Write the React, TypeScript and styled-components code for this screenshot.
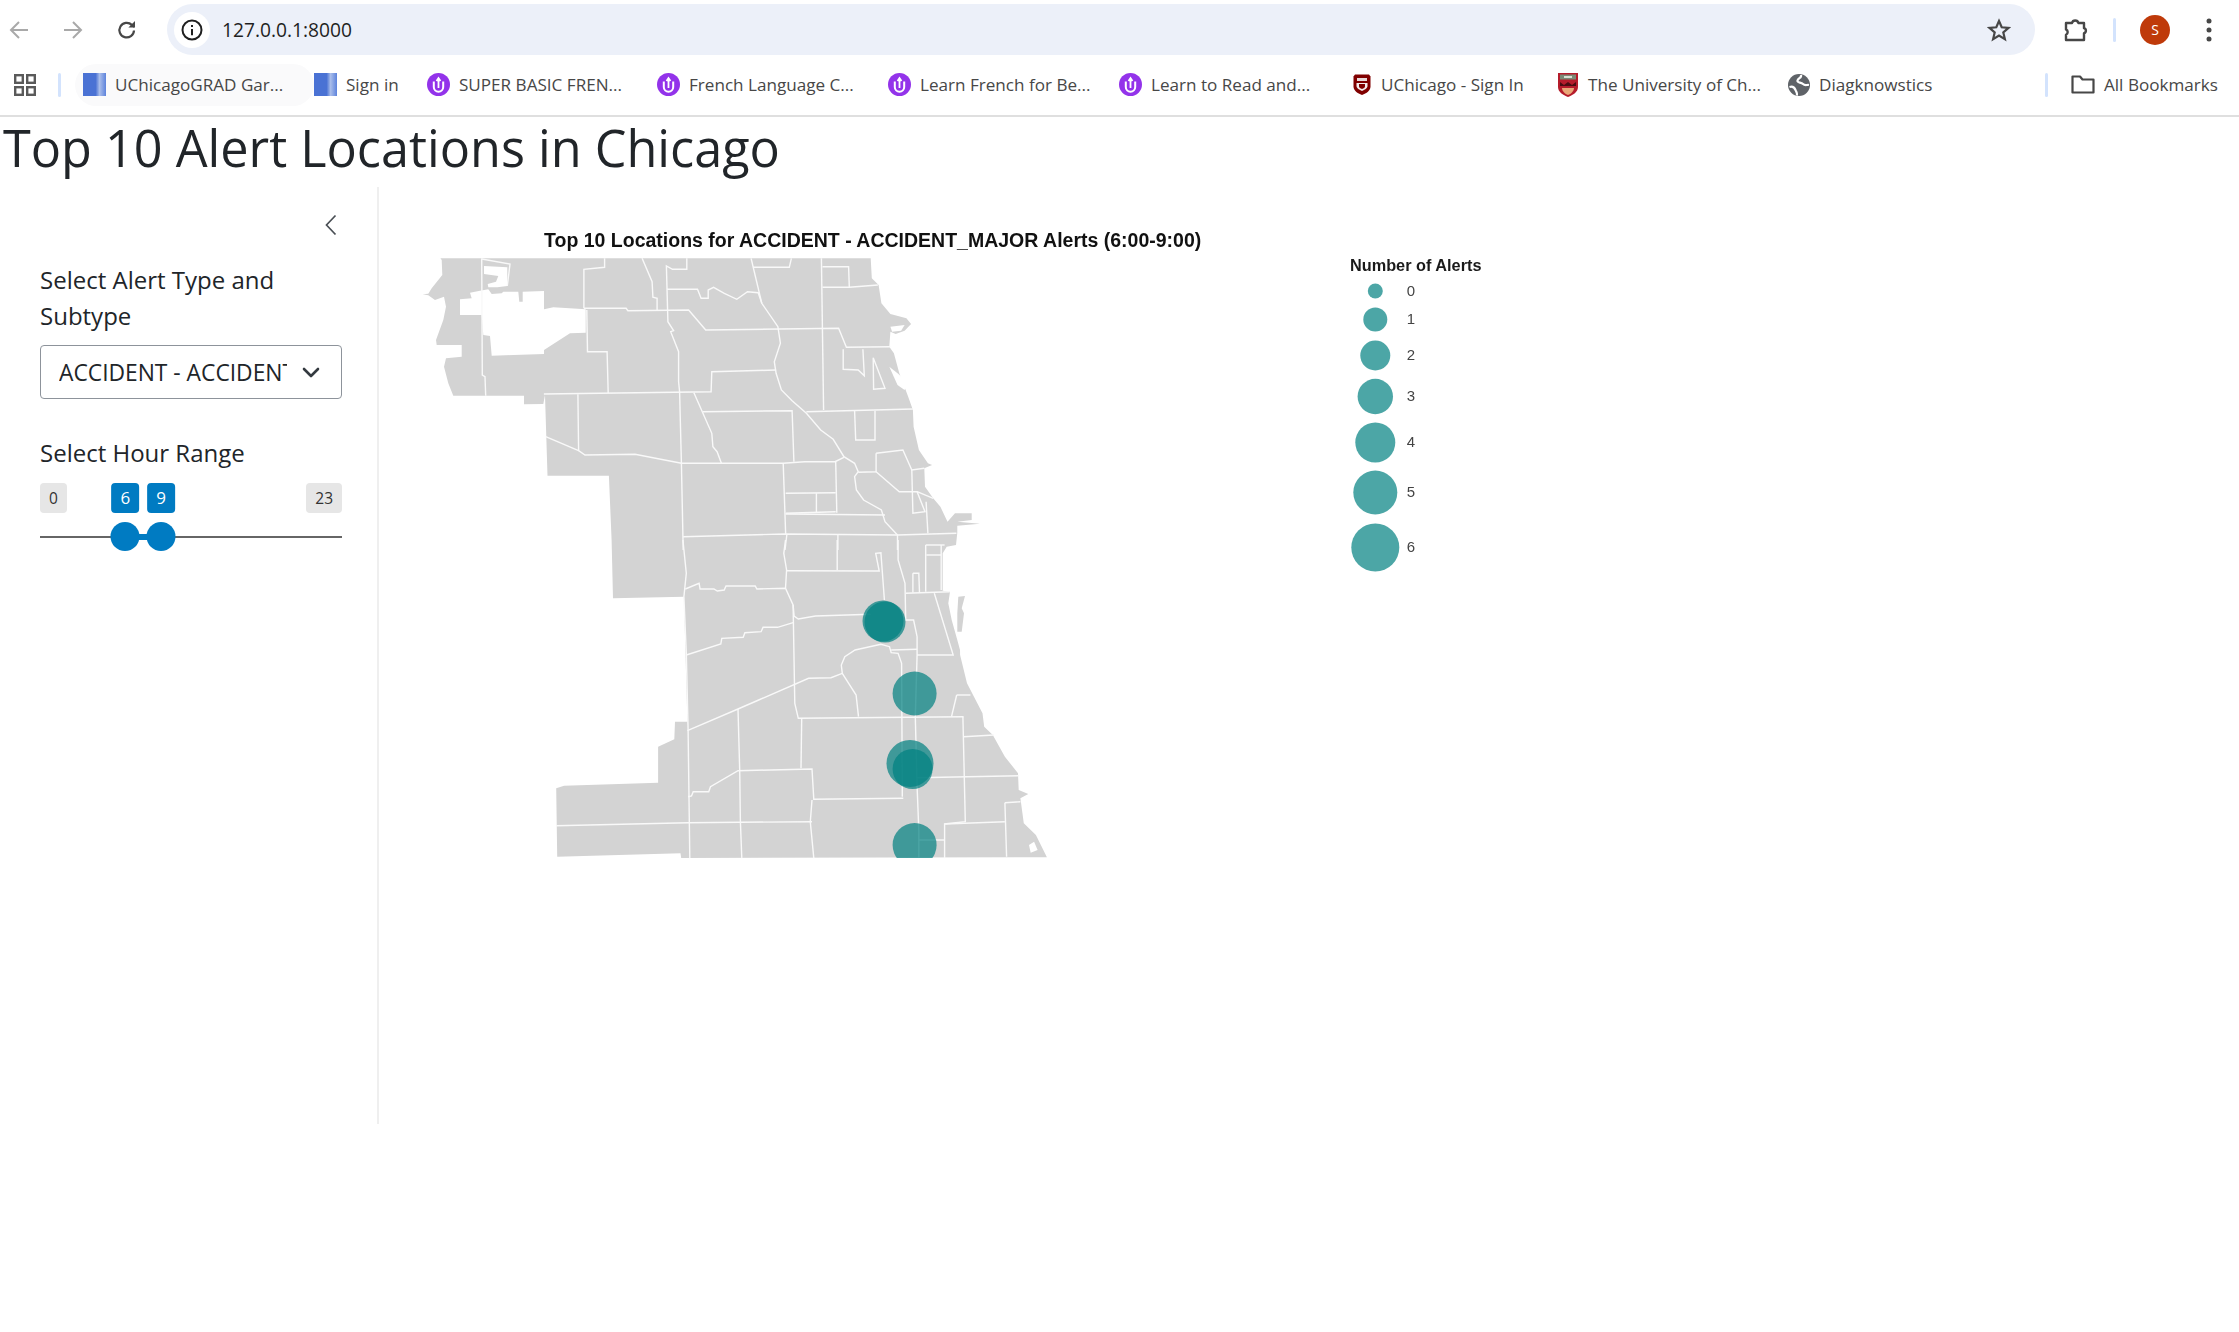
import React from "react";
import styled, { createGlobalStyle } from "styled-components";

const GlobalStyle = createGlobalStyle`
  html, body { margin: 0; padding: 0; background: #fff; }
  body { font-family: "Open Sans", "Noto Sans", sans-serif; color: #212529; }
`;

const Page = styled.div`
  width: 2239px;
  height: 1332px;
  overflow: hidden;
  background: #fff;
`;

/* ---------- browser chrome ---------- */
const Toolbar = styled.div`
  display: flex;
  align-items: center;
  height: 51px;
  padding-top: 4px;
`;
const NavSlot = styled.div<{ $w: number; $ml?: number }>`
  display: flex;
  align-items: center;
  justify-content: center;
  flex: none;
  width: ${(p) => p.$w}px;
  margin-left: ${(p) => p.$ml ?? 0}px;
`;
const AddressBar = styled.div`
  display: flex;
  align-items: center;
  flex: none;
  width: 1868px;
  height: 51px;
  margin-left: 21px;
  background: #ecf0f9;
  border-radius: 26px;
`;
const InfoBadge = styled.div`
  display: flex;
  align-items: center;
  justify-content: center;
  flex: none;
  width: 36px;
  height: 36px;
  margin-left: 7px;
  background: #fff;
  border-radius: 50%;
`;
const Url = styled.div`
  flex: 1;
  margin-left: 12px;
  font-family: "Open Sans", sans-serif;
  font-size: 19.2px;
  color: #1f1f1f;
`;
const StarSlot = styled.div`
  display: flex;
  margin-right: 24px;
`;
const ToolDivider = styled.div`
  flex: none;
  width: 3px;
  height: 24px;
  margin-right: 24px;
  background: #d3e3fd;
  border-radius: 2px;
`;
const Avatar = styled.div`
  display: flex;
  align-items: center;
  justify-content: center;
  flex: none;
  width: 30px;
  height: 30px;
  background: #bf3a0a;
  border-radius: 50%;
  color: #fff;
  font-size: 14px;
`;
const BookmarkBar = styled.div`
  display: flex;
  align-items: center;
  height: 62px;
  padding-bottom: 1px;
  border-bottom: 2px solid #dfdfdf;
  box-sizing: border-box;
`;
const BarDivider = styled.div<{ $left: number; $right: number }>`
  flex: none;
  width: 3px;
  height: 24px;
  margin: 0 ${(p) => p.$right}px 0 ${(p) => p.$left}px;
  background: #d3e3fd;
  border-radius: 2px;
`;
const Bookmark = styled.div<{ $w: number; $hover?: boolean }>`
  display: flex;
  align-items: center;
  flex: none;
  gap: 9px;
  width: ${(p) => p.$w}px;
  height: 42px;
  margin-left: ${(p) => (p.$hover ? "-8px" : "0")};
  padding-left: ${(p) => (p.$hover ? "8px" : "0")};
  box-sizing: border-box;
  background: ${(p) => (p.$hover ? "#fafafb" : "transparent")};
  border-radius: 21px;
  font-size: 17.1px;
  color: #474747;
  white-space: nowrap;
`;
const IconBox = styled.span`
  display: flex;
  flex: none;
`;

/* ---------- page ---------- */
const Title = styled.h1`
  margin: 0;
  height: 70px;
  padding-left: 3px;
  font-family: "Open Sans", sans-serif;
  font-size: 50.4px;
  font-weight: 400;
  line-height: 62px;
  color: #212529;
`;
const Layout = styled.div`
  display: flex;
  align-items: flex-start;
`;
const Sidebar = styled.aside`
  flex: none;
  box-sizing: border-box;
  width: 379px;
  height: 937px;
  padding: 24px 36px 0 40px;
  border-right: 2px solid #efefef;
`;
const Collapse = styled.div`
  display: flex;
  justify-content: flex-end;
  height: 22px;
  margin: 3px 4px 26px 0;
`;
const FieldLabel = styled.div`
  font-size: 24px;
  line-height: 36px;
  color: #212529;
`;
const Select = styled.div`
  display: flex;
  align-items: center;
  box-sizing: border-box;
  width: 302px;
  height: 54px;
  margin-top: 11px;
  padding: 0 18px;
  border: 1.5px solid #8d939b;
  border-radius: 4px;
  background: #fff;
`;
const SelectValue = styled.div`
  flex: none;
  width: 228px;
  overflow: hidden;
  white-space: nowrap;
  font-size: 22.8px;
  color: #212529;
`;
const SelectArrow = styled.div`
  display: flex;
  margin-left: 15px;
`;
const HourField = styled.div`
  margin-top: 36px;
`;
const Slider = styled.div`
  position: relative;
  width: 302px;
  height: 84px;
  margin-top: 12px;
`;
const BoundBadge = styled.div<{ $side: "left" | "right" }>`
  position: absolute;
  top: 0;
  ${(p) => p.$side}: 0;
  height: 30px;
  padding: 0 9px;
  background: #e6e6e6;
  border-radius: 4px;
  color: #333;
  font-size: 15.5px;
  line-height: 30px;
`;
const ValueBadge = styled.div`
  position: absolute;
  top: 0;
  height: 30px;
  padding: 0 9px;
  transform: translateX(-50%);
  background: #007bc2;
  border-radius: 4px;
  color: #fff;
  font-size: 17px;
  line-height: 30px;
`;
const Track = styled.div`
  position: absolute;
  left: 0;
  right: 0;
  top: 53px;
  height: 1.5px;
  background: #666;
`;
const TrackFill = styled.div`
  position: absolute;
  top: 51px;
  height: 6px;
  background: #007bc2;
`;
const Handle = styled.div`
  position: absolute;
  top: 39px;
  width: 29px;
  height: 29px;
  transform: translateX(-50%);
  background: #007bc2;
  border-radius: 50%;
`;
const Main = styled.main`
  flex: 1;
  min-width: 0;
`;
const PlotSvg = styled.svg`
  display: block;
  filter: blur(0.45px);
`;
const PlotTitle = styled.text`
  font-family: "Liberation Sans", Arial, sans-serif;
  font-size: 19.5px;
  font-weight: 700;
  fill: #111;
`;
const LegendTitle = styled.text`
  font-family: "Liberation Sans", Arial, sans-serif;
  font-size: 16.3px;
  font-weight: 700;
  fill: #1a1a1a;
`;
const LegendLabel = styled.text`
  font-family: "Liberation Sans", Arial, sans-serif;
  font-size: 15px;
  fill: #444;
  text-anchor: middle;
  dominant-baseline: central;
`;

/* ---------- map tracing ---------- */
type P = number[];
const Z4 = (x: number, y: number) => [410 + x / 2.8, 210 + y / 3];
const Z5 = (x: number, y: number) => [540 + x / 2.904, 540 + y / 3];
const Z10 = (x: number, y: number) => [880 + x / 3, 480 + y / 3];
const Z11 = (x: number, y: number) => [420 + x / 3, 250 + y / 3];
const conv = (f: (x: number, y: number) => number[], p: P) => {
  const out: number[][] = [];
  for (let i = 0; i < p.length; i += 2) out.push(f(p[i], p[i + 1]));
  return out;
};
const d = (pts: number[][], close = false) =>
  "M" + pts.map((q) => q[0].toFixed(1) + " " + q[1].toFixed(1)).join("L") + (close ? "Z" : "");

const outline = d(
  [
    ...conv(Z4, [85,145, 1290,145, 1293,205, 1312,225, 1320,280, 1345,312, 1390,325, 1403,342, 1385,362, 1360,372, 1345,365, 1342,410, 1355,430, 1370,490, 1395,560, 1408,600, 1410,650, 1425,720, 1450,760, 1462,765, 1440,775, 1442,830, 1465,865, 1485,890, 1505,935]),
    ...conv(Z10, [225,100, 275,100, 275,120, 232,125, 300,131, 232,137, 232,158, 228,195, 200,200, 188,220, 188,332, 210,335, 205,370, 215,420, 232,480, 240,510]),
    ...conv(Z5, [1220,345, 1240,430, 1285,520, 1290,560, 1315,585, 1350,650, 1388,700, 1390,750, 1418,762, 1395,775, 1405,850, 1440,885, 1472,952, 410,954, 408,940, 50,950, 47,745, 70,737, 343,728, 343,620, 390,598, 392,545, 428,545, 418,170, 212,175, 208,0]),
    ...conv(Z4, [557,797, 385,797, 378,555]),
    ...conv(Z11, [370,462, 312,463, 312,437, 100,437, 85,400, 72,350, 78,325, 125,320, 125,285, 50,285, 48,270, 70,210, 78,170, 72,140, 45,150, 25,136, 8,133, 25,131, 35,115, 67,75, 65,30]),
  ],
  true
);

const holes = [
  d(conv(Z11, [120,148, 155,145, 150,128, 180,122, 205,118, 215,132, 245,130, 250,125, 295,125, 298,155, 308,155, 308,125, 372,123, 372,178, 400,172, 497,178, 497,248, 450,250, 372,300, 372,312, 215,317, 210,258, 190,255, 185,195, 120,195]), true),
  d(conv(Z11, [192,48, 262,52, 262,108, 232,112, 205,112, 203,102, 228,95, 235,78, 192,72]), true),
  d(conv(Z4, [1345,350, 1385,345, 1375,362, 1350,365]), true),
  d(conv(Z4, [1342,470, 1365,490, 1392,515, 1385,540, 1365,525]), true),
  d(conv(Z5, [1420,915, 1435,905, 1445,930, 1425,938]), true),
];
const island = d(conv(Z10, [235,350, 255,348, 245,385, 252,400, 245,455, 232,455, 232,400]), true);

const lines11: P[] = [
  [185,25, 187,375, 195,380, 197,437],
  [185,27, 270,42, 262,108],
];
const lines4: P[] = [
  [545,145, 545,172, 487,178, 487,295],
  [650,145, 678,215, 680,262, 692,265, 692,300],
  [775,145, 775,178, 735,178, 718,168, 722,335, 738,362, 730,365, 752,425, 752,515, 755,545, 760,760, 765,1020],
  [720,238, 805,238, 815,265, 835,265, 835,240, 850,232, 880,250, 915,268, 945,245, 975,248, 985,280, 1030,350, 1037,400, 1020,455, 1025,490, 1040,540, 1070,572, 1110,610, 1150,660, 1185,688, 1215,740, 1245,760, 1255,785, 1245,800, 1250,840, 1270,870, 1320,900, 1330,935, 1365,975, 1365,1020],
  [955,145, 985,280],
  [960,172, 1062,172, 1068,145],
  [1152,145, 1158,600],
  [1155,170, 1228,170, 1230,232, 1155,232],
  [1230,232, 1310,225],
  [487,295, 605,295, 610,302, 780,300, 828,360, 1200,355, 1222,412, 1345,410],
  [495,300, 497,425, 552,425, 555,550],
  [375,552, 843,545, 845,485, 1025,480],
  [795,548, 845,670, 848,710, 860,725, 872,760],
  [820,605, 1070,602, 1075,755],
  [470,553, 472,722, 490,735, 630,733, 760,760, 1045,760, 1105,755, 1190,755, 1215,742],
  [380,680, 472,722],
  [1045,760, 1052,975],
  [1052,850, 1192,848],
  [1052,910, 1192,905],
  [1192,755, 1195,908],
  [1138,850, 1138,908],
  [1052,912, 1330,915],
  [765,980, 1050,972, 1365,975, 1530,970],
  [1055,975, 1050,1020],
  [1198,975, 1198,1020],
  [1110,605, 1408,597],
  [1245,602, 1248,690, 1302,690, 1302,602],
  [1305,730, 1380,720, 1405,780, 1440,775],
  [1305,730, 1305,785, 1255,787],
  [1305,785, 1370,845, 1420,845, 1442,905, 1408,910, 1405,780],
  [1420,845, 1465,865],
  [1445,875, 1450,970],
  [1213,418, 1213,478, 1255,480, 1272,497, 1268,418],
  [1297,443, 1330,535, 1298,538, 1297,443],
];
const lines5: P[] = [
  [415,0, 425,100, 418,170, 425,340, 430,570, 435,955],
  [422,147, 462,130, 465,147, 505,147, 515,153, 535,150, 540,138, 625,138, 630,147, 713,145, 735,195, 738,228, 750,237, 800,228, 960,223],
  [713,0, 708,40, 716,90, 713,145],
  [716,92, 985,93, 975,40, 990,38, 1000,180],
  [863,0, 863,90],
  [735,195, 740,490, 750,535, 1230,530],
  [425,345, 525,312, 528,295, 590,292, 595,278, 642,275, 648,262, 690,262, 735,248],
  [428,572, 575,507, 635,480, 780,415, 845,413, 878,400, 875,375, 885,350, 915,330, 990,313, 1015,320, 1020,338, 1040,340, 1050,370, 1052,770],
  [878,400, 918,465, 925,530],
  [575,507, 580,690, 582,845, 586,955],
  [430,770, 440,768, 445,755, 490,755, 495,740, 575,692, 790,687, 795,778, 1055,775],
  [760,535, 758,685],
  [790,780, 785,845, 795,955],
  [47,857, 430,848, 790,845],
  [1040,0, 1040,60, 1060,130, 1062,240, 1085,240, 1095,290, 1095,345, 1090,530, 1095,740, 1100,870, 1100,955],
  [1020,330, 1095,328],
  [1120,15, 1120,155],
  [1120,15, 1175,15],
  [1122,45, 1165,45],
  [1165,15, 1165,150],
  [1083,100, 1100,100, 1102,158],
  [1083,100, 1083,158],
  [1062,160, 1190,155],
  [1145,160, 1200,345, 1095,345],
  [1210,465, 1250,465],
  [1210,465, 1195,530],
  [1228,530, 1235,845, 1175,852, 1175,955],
  [1175,852, 1350,845],
  [1230,590, 1318,585],
  [1095,713, 1390,707],
  [1350,788, 1395,785],
  [1350,788, 1355,950],
  [1100,900, 1175,900],
];

const mapLines = [
  ...lines11.map((p) => d(conv(Z11, p))),
  ...lines4.map((p) => d(conv(Z4, p))),
  ...lines5.map((p) => d(conv(Z5, p))),
];

const points = [
  { x: 883, y: 621, r: 20.5 },
  { x: 885, y: 622, r: 20.5 },
  { x: 914.6, y: 693.5, r: 22 },
  { x: 910, y: 763.5, r: 23.5 },
  { x: 912.6, y: 769, r: 20 },
  { x: 914.6, y: 845, r: 22 },
];
const legend = [
  { n: 0, y: 291, r: 7.5 },
  { n: 1, y: 319.5, r: 12 },
  { n: 2, y: 355.5, r: 15 },
  { n: 3, y: 396.5, r: 17.7 },
  { n: 4, y: 442.5, r: 20 },
  { n: 5, y: 492.5, r: 22 },
  { n: 6, y: 547.5, r: 24 },
];

/* ---------- icons ---------- */
const Arrow = ({ flip }: { flip?: boolean }) => (
  <svg width="20" height="20" viewBox="0 0 20 20" fill="none" stroke="#a9a9a9" strokeWidth="2">
    <path d={flip ? "M1 10H18M10 2l8 8-8 8" : "M19 10H2M10 2l-8 8 8 8"} />
  </svg>
);
const Reload = () => (
  <svg width="20" height="20" viewBox="0 0 20 20" fill="none" stroke="#474747" strokeWidth="2.2">
    <path d="M17 10.5a7.3 7.3 0 1 1-2.2-5.6L17.5 7" />
    <path d="M18 1v6.6h-6.6" fill="#474747" stroke="none" />
  </svg>
);
const Info = () => (
  <svg width="22" height="22" viewBox="0 0 22 22" fill="none" stroke="#1f1f1f" strokeWidth="2">
    <circle cx="11" cy="11" r="9.5" />
    <path d="M11 10v6.2M11 6v2" />
  </svg>
);
const StarIcon = () => (
  <svg width="24" height="24" viewBox="0 0 24 24" fill="none" stroke="#474747" strokeWidth="2.2" strokeLinejoin="miter">
    <path d="M12 3l2.7 6.3 6.8.6-5.2 4.5 1.6 6.7-5.9-3.6-5.9 3.6 1.6-6.7-5.2-4.5 6.8-.6z" />
  </svg>
);
const PuzzleIcon = () => (
  <svg width="25" height="24" viewBox="0 0 25 24" fill="none" stroke="#474747" strokeWidth="2.4" strokeLinejoin="round">
    <path d="M2 5h6a3.3 3.3 0 0 1 6.4 0H20v5.2a2.6 2.6 0 0 1 0 5V22H2v-5.2a3 3 0 0 0 0-5.4z" />
  </svg>
);
const Dots = () => (
  <svg width="6" height="24" viewBox="0 0 6 24" fill="#474747">
    <circle cx="3" cy="3" r="2.5" />
    <circle cx="3" cy="12" r="2.5" />
    <circle cx="3" cy="21" r="2.5" />
  </svg>
);
const Apps = () => (
  <svg width="22" height="22" viewBox="0 0 22 22" fill="none" stroke="#5a5a5a" strokeWidth="2.4">
    <rect x="1.2" y="1.2" width="7.6" height="7.6" />
    <rect x="13.2" y="1.2" width="7.6" height="7.6" />
    <rect x="1.2" y="13.2" width="7.6" height="7.6" />
    <rect x="13.2" y="13.2" width="7.6" height="7.6" />
  </svg>
);
const DocIcon = ({ id }: { id: string }) => (
  <svg width="23" height="23" viewBox="0 0 23 23">
    <defs>
      <linearGradient id={id} x1="0" x2="1" y1="0" y2="0">
        <stop offset="0.55" stopColor="#4a72d4" />
        <stop offset="0.72" stopColor="#a9bdea" />
        <stop offset="1" stopColor="#5d83dc" />
      </linearGradient>
    </defs>
    <rect width="23" height="23" fill={`url(#${id})`} />
  </svg>
);
const PurpleIcon = () => (
  <svg width="23" height="23" viewBox="0 0 23 23" fill="none">
    <circle cx="11.5" cy="11.5" r="11.5" fill="#9333ea" />
    <path d="M6.8 8.5v5.5a4.7 4.7 0 0 0 9.4 0V8.5" stroke="#fff" strokeWidth="2" />
    <path d="M9.5 8l2-3 2 3M11.5 6v9" stroke="#fff" strokeWidth="1.8" />
  </svg>
);
const ShieldIcon = () => (
  <svg width="20" height="23" viewBox="0 0 20 23">
    <path d="M3 1.5h14l1.5 2v10c0 4-4 7-8.5 8.5-4.5-1.5-8.5-4.5-8.5-8.5v-10z" fill="#800000" />
    <rect x="5" y="5" width="10" height="3" fill="#e8d9d9" />
    <path d="M4.5 10h11v3c0 2-3 4-5.5 5-2.5-1-5.5-3-5.5-5z" fill="#f4ecec" />
    <path d="M7 11h6v2.5c0 1-1.5 2-3 2.5-1.5-.5-3-1.5-3-2.5z" fill="#800000" />
  </svg>
);
const CrestIcon = () => (
  <svg width="22" height="24" viewBox="0 0 22 24">
    <path d="M1 0h20v14c0 5-5 8-10 10C6 22 1 19 1 14z" fill="#b51c2b" />
    <rect x="3" y="1.5" width="16" height="5" fill="#7b8a76" />
    <rect x="7" y="3" width="8" height="2" fill="#d8e0d4" />
    <path d="M3 9l4 3 4-3 4 3 4-3v4H3z" fill="#4a0d12" />
    <path d="M5 15h12c0 3-3 6-6 7-3-1-6-4-6-7z" fill="#e9a778" />
  </svg>
);
const GlobeIcon = () => (
  <svg width="22" height="22" viewBox="0 0 22 22">
    <circle cx="11" cy="11" r="11" fill="#5f6368" />
    <path d="M13 1c1 3-3 3-3.5 5.500C9 9 13 8 15 10c2 2 4 .5 6 1M1.500 13c3-1 5 .5 6 3 .7 2 2 3 1.500 5.500" stroke="#fff" strokeWidth="2.2" fill="none" />
  </svg>
);
const FolderIcon = () => (
  <svg width="24" height="19" viewBox="0 0 24 19" fill="none" stroke="#474747" strokeWidth="2.2" strokeLinejoin="round">
    <path d="M1.5 1.5h7.5l2.5 3h11v13h-21z" />
  </svg>
);
const ChevronLeft = () => (
  <svg width="12" height="22" viewBox="0 0 12 22" fill="none" stroke="#4a4f55" strokeWidth="1.7">
    <path d="M10.5 1.5L1.5 11l9 9.5" />
  </svg>
);
const ChevronDown = () => (
  <svg width="18" height="11" viewBox="0 0 18 11" fill="none" stroke="#343a40" strokeWidth="2.6" strokeLinecap="round" strokeLinejoin="round">
    <path d="M2 2l7 7 7-7" />
  </svg>
);

const bookmarks = [
  { label: "UChicagoGRAD Gar...", w: 239, icon: <DocIcon id="doc-a" />, hover: true },
  { label: "Sign in", w: 113, icon: <DocIcon id="doc-b" /> },
  { label: "SUPER BASIC FREN...", w: 230, icon: <PurpleIcon /> },
  { label: "French Language C...", w: 231, icon: <PurpleIcon /> },
  { label: "Learn French for Be...", w: 231, icon: <PurpleIcon /> },
  { label: "Learn to Read and...", w: 233, icon: <PurpleIcon /> },
  { label: "UChicago - Sign In", w: 205, icon: <ShieldIcon /> },
  { label: "The University of Ch...", w: 231, icon: <CrestIcon /> },
  { label: "Diagknowstics", w: 257, icon: <GlobeIcon /> },
];

const HOUR_MIN = 0;
const HOUR_MAX = 23;
const hourX = (v: number) => 14 + ((v - HOUR_MIN) / (HOUR_MAX - HOUR_MIN)) * 274;

export default function App() {
  return (
    <Page>
      <GlobalStyle />
      <Toolbar>
        <NavSlot $w={38}><Arrow /></NavSlot>
        <NavSlot $w={70}><Arrow flip /></NavSlot>
        <NavSlot $w={38}><Reload /></NavSlot>
        <AddressBar>
          <InfoBadge><Info /></InfoBadge>
          <Url>127.0.0.1:8000</Url>
          <StarSlot><StarIcon /></StarSlot>
        </AddressBar>
        <NavSlot $w={74} $ml={4}><PuzzleIcon /></NavSlot>
        <ToolDivider />
        <Avatar>S</Avatar>
        <NavSlot $w={78}><Dots /></NavSlot>
      </Toolbar>
      <BookmarkBar>
        <NavSlot $w={50}><Apps /></NavSlot>
        <BarDivider $left={8} $right={22} />
        {bookmarks.map((b) => (
          <Bookmark key={b.label} $w={b.w} $hover={b.hover}>
            <IconBox>{b.icon}</IconBox>
            {b.label}
          </Bookmark>
        ))}
        <BarDivider $left={0} $right={23} />
        <Bookmark $w={170}>
          <IconBox><FolderIcon /></IconBox>
          All Bookmarks
        </Bookmark>
      </BookmarkBar>
      <Title>Top 10 Alert Locations in Chicago</Title>
      <Layout>
        <Sidebar>
          <Collapse><ChevronLeft /></Collapse>
          <FieldLabel>Select Alert Type and Subtype</FieldLabel>
          <Select>
            <SelectValue>ACCIDENT - ACCIDENT_MAJOR</SelectValue>
            <SelectArrow><ChevronDown /></SelectArrow>
          </Select>
          <HourField>
            <FieldLabel>Select Hour Range</FieldLabel>
            <Slider>
              <BoundBadge $side="left">{HOUR_MIN}</BoundBadge>
              <BoundBadge $side="right">{HOUR_MAX}</BoundBadge>
              <ValueBadge style={{ left: hourX(6) }}>6</ValueBadge>
              <ValueBadge style={{ left: hourX(9) }}>9</ValueBadge>
              <Track />
              <TrackFill style={{ left: hourX(6), width: hourX(9) - hourX(6) }} />
              <Handle style={{ left: hourX(6) }} />
              <Handle style={{ left: hourX(9) }} />
            </Slider>
          </HourField>
        </Sidebar>
        <Main>
          <PlotSvg width="1200" height="720" viewBox="379 187 1200 720">
            <defs>
              <clipPath id="map-clip">
                <rect x="400" y="240" width="700" height="618" />
              </clipPath>
            </defs>
            <PlotTitle x="544" y="247">Top 10 Locations for ACCIDENT - ACCIDENT_MAJOR Alerts (6:00-9:00)</PlotTitle>
            <path d={outline} fill="#d3d3d3" />
            <path d={island} fill="#d3d3d3" />
            {holes.map((h, i) => (
              <path key={i} d={h} fill="#fff" />
            ))}
            {mapLines.map((l, i) => (
              <path key={i} d={l} fill="none" stroke="#f9f9f9" strokeWidth="1.4" />
            ))}
            <g clipPath="url(#map-clip)">
              {points.map((c, i) => (
                <circle key={i} cx={c.x} cy={c.y} r={c.r} fill="#008080" fillOpacity="0.7" />
              ))}
            </g>
            <LegendTitle x="1350" y="271">Number of Alerts</LegendTitle>
            {legend.map((l) => (
              <g key={l.n}>
                <circle cx="1375.3" cy={l.y} r={l.r} fill="#008080" fillOpacity="0.7" />
                <LegendLabel x="1411" y={l.y - 1}>{l.n}</LegendLabel>
              </g>
            ))}
          </PlotSvg>
        </Main>
      </Layout>
    </Page>
  );
}
